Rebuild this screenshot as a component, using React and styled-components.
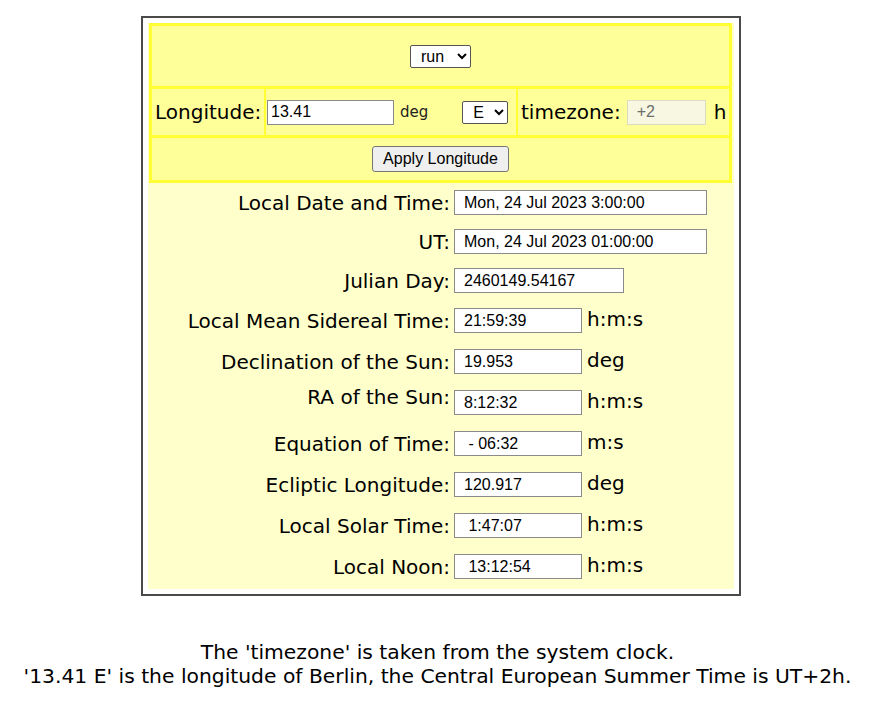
import React from "react";
import styled, { createGlobalStyle } from "styled-components";

const GlobalStyle = createGlobalStyle`
  body {
    margin: 8px;
    background: #fff;
    font-family: "DejaVu Sans", Verdana, sans-serif;
    color: #000;
  }
`;

const Frame = styled.div`
  box-sizing: border-box;
  width: 600px;
  margin: 8px 0 0 133px;
  border: 2px solid #4a4a4a;
  padding: 5px;
`;

const Panel = styled.div`
  background: #ffffcc;
  padding: 0 2px 2px 1px;
`;

const Controls = styled.div`
  border: 3px solid #ffff33;
  background: #ffff99;
`;

const Band = styled.div`
  display: flex;
  justify-content: center;
  align-items: center;
  height: ${(p) => p.$h}px;
  border-top: ${(p) => (p.$first ? "none" : "3px solid #ffff33")};
`;

const Cells = styled.div`
  display: grid;
  grid-template-columns: 112px 252px 1fr;
  height: 46px;
  border-top: 3px solid #ffff33;
`;

const Cell = styled.div`
  display: flex;
  align-items: center;
  padding: 0 ${(p) => p.$pad || 4}px;
  border-left: ${(p) => (p.$first ? "none" : "2px solid #ffff33")};
  gap: 6px;
`;

const BigLabel = styled.span`
  font-size: 20px;
  white-space: nowrap;
  margin-left: ${(p) => p.$shift || 0}px;
`;

const Field = styled.input`
  box-sizing: border-box;
  height: 25px;
  width: ${(p) => p.$w}px;
  border: 1px solid #8a8a8a;
  border-radius: 0;
  padding: 0 0 0 ${(p) => p.$pad ?? 9}px;
  font-family: "Liberation Sans", Arial, sans-serif;
  font-size: 16px;
  color: #000;
  background: #fff;
  white-space: pre;

  &:disabled {
    background: #f7f7e2;
    border-color: #dcdcc0;
    color: #6d6d6d;
  }
`;

const Small = styled.span`
  font-size: 15px;
  color: #222;
  margin: 0 28px 0 0;
`;

const Picker = styled.select`
  height: 23px;
  font-family: "Liberation Sans", Arial, sans-serif;
  font-size: 16px;
  border: 1px solid #555;
  border-radius: 2px;
  background: #fff;
  color: #000;
  padding: 0 2px 0 6px;
`;

const Apply = styled.button`
  height: 26px;
  padding: 0 10px;
  font-family: "Liberation Sans", Arial, sans-serif;
  font-size: 16px;
  color: #000;
  background: #efefef;
  border: 1px solid #767676;
  border-radius: 3px;
`;

const Results = styled.div`
  display: flex;
  flex-direction: column;
`;

const Row = styled.div`
  display: flex;
  align-items: center;
  height: ${(p) => (p.$tall ? 41 : 39)}px;
`;

const Label = styled.div`
  box-sizing: border-box;
  width: 305px;
  padding-right: 4px;
  font-size: 20px;
  text-align: right;
  white-space: nowrap;
  position: relative;
  top: ${(p) => (p.$lift ? -6 : 0)}px;
`;

const Unit = styled.div`
  font-size: 20px;
  padding: 0 0 3px 5px;
`;

const Note = styled.p`
  margin: 44px 0 0;
  text-align: center;
  font-family: "DejaVu Sans", Tahoma, sans-serif;
  font-size: 20.3px;
  line-height: 24px;
`;

const rows = [
  { label: "Local Date and Time:", value: "Mon, 24 Jul 2023 3:00:00", w: 253 },
  { label: "UT:", value: "Mon, 24 Jul 2023 01:00:00", w: 253 },
  { label: "Julian Day:", value: "2460149.54167", w: 170 },
  { label: "Local Mean Sidereal Time:", value: "21:59:39", w: 128, unit: "h:m:s" },
  { label: "Declination of the Sun:", value: "19.953", w: 128, unit: "deg" },
  { label: "RA of the Sun:", value: "8:12:32", w: 128, unit: "h:m:s", lift: true },
  { label: "Equation of Time:", value: " - 06:32", w: 128, unit: "m:s" },
  { label: "Ecliptic Longitude:", value: "120.917", w: 128, unit: "deg" },
  { label: "Local Solar Time:", value: " 1:47:07", w: 128, unit: "h:m:s" },
  { label: "Local Noon:", value: " 13:12:54", w: 128, unit: "h:m:s" },
];

export default function App() {
  return (
    <>
      <GlobalStyle />
      <Frame>
        <Panel>
          <Controls>
            <Band $first $h={60}>
              <Picker defaultValue="run">
                <option value="run">run</option>
                <option value="stop">stop</option>
              </Picker>
            </Band>
            <Cells>
              <Cell $first $pad={3}>
                <BigLabel>Longitude:</BigLabel>
              </Cell>
              <Cell $pad={1}>
                <Field $w={127} $pad={3} defaultValue="13.41" />
                <Small>deg</Small>
                <Picker defaultValue="E">
                  <option value="E">E</option>
                  <option value="W">W</option>
                </Picker>
              </Cell>
              <Cell $pad={3}>
                <BigLabel>timezone:</BigLabel>
                <Field $w={79} disabled defaultValue="+2" />
                <BigLabel $shift={2}>h</BigLabel>
              </Cell>
            </Cells>
            <Band $h={42}>
              <Apply>Apply Longitude</Apply>
            </Band>
          </Controls>
          <Results>
            {rows.map((r) => (
              <Row key={r.label} $tall={!!r.unit}>
                <Label $lift={r.lift}>{r.label}</Label>
                <Field $w={r.w} readOnly value={r.value} />
                {r.unit && <Unit>{r.unit}</Unit>}
              </Row>
            ))}
          </Results>
        </Panel>
      </Frame>
      <Note>
        The 'timezone' is taken from the system clock.
        <br />
        '13.41 E' is the longitude of Berlin, the Central European Summer Time is UT+2h.
      </Note>
    </>
  );
}
